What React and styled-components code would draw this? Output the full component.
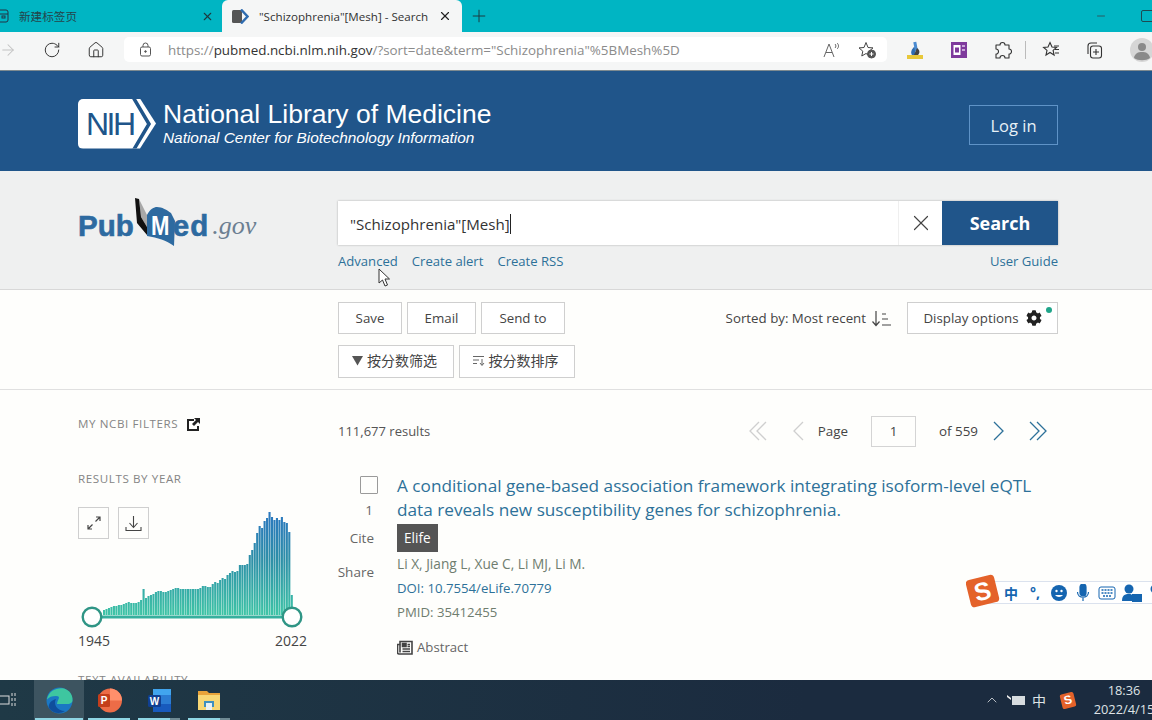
import React from 'react'
import styled, { createGlobalStyle } from 'styled-components'
import { ArrowRight, RotateCw, House, Plus, X, Minus, ChevronUp } from 'lucide-react'
import { FaCog } from 'react-icons/fa'

const sans = `"Open Sans", "Noto Sans CJK SC", sans-serif`
const blue = '#20558a'
const link = '#2d7199'

const GlobalStyle = createGlobalStyle`
    html, body { margin: 0; padding: 0; background: #fff; }
    * { box-sizing: border-box; }
`

const Page = styled.div`
    position: relative;
    width: 1152px;
    height: 720px;
    overflow: hidden;
    display: flex;
    flex-direction: column;
    font-family: ${sans};
    color: #555;
    background: #fefefc;
`

/* browser chrome */
const TabBar = styled.div`
    height: 32px;
    flex: none;
    display: flex;
    background: #00b5c3;
`
const Tab = styled.div`
    width: ${p => p.$width}px;
    height: ${p => (p.$active ? 35 : 32)}px;
    flex: none;
    display: flex;
    align-items: center;
    font-size: 11.6px;
    color: ${p => (p.$active ? '#333' : '#24444a')};
    padding: ${p => p.$pad};
    background: ${p => (p.$active ? '#f5f6f6' : 'transparent')};
    border-radius: 6px 6px 0 0;
    z-index: 1;
`
const TabTitle = styled.span`
    flex: 1;
    margin-left: ${p => p.$gap}px;
    white-space: nowrap;
`
const NewTab = styled.div`
    width: 34px;
    display: flex;
    align-items: center;
    justify-content: center;
    color: #1d3a40;
`
const WindowControls = styled.div`
    margin-left: auto;
    display: flex;
    align-items: center;
    gap: 34px;
    width: 57px;
    overflow: hidden;
    color: #2b5a62;
`
const RestoreBox = styled.div`
    width: 14px;
    height: 12px;
    flex: none;
    border: 1px solid #1d4a52;
    border-radius: 2px;
`
const Toolbar = styled.div`
    height: 39px;
    flex: none;
    display: flex;
    align-items: center;
    background: #f5f6f6;
    border-bottom: 1px solid #7d8a90;
    padding-bottom: 3px;
    color: #333;
`
const ToolSlot = styled.div`
    width: ${p => p.$width || 44}px;
    flex: none;
    margin-left: ${p => p.$left || 0}px;
    display: flex;
    justify-content: center;
    align-items: center;
`
const UrlBox = styled.div`
    width: 763px;
    height: 25px;
    flex: none;
    margin: 0 6px 0 6px;
    background: #fff;
    border-radius: 5px;
    display: flex;
    align-items: center;
    font-size: 13.4px;
    color: #8b8b8b;
    padding-left: 15px;
`
const UrlText = styled.span`
    margin-left: 16px;
    flex: 1;
    white-space: nowrap;
    b { font-weight: 400; color: #333; }
`
const UrlIcons = styled.div`
    display: flex;
    align-items: center;
    gap: 16px;
    padding-right: 10px;
    color: #555;
`
const Separator = styled.div`
    width: 1px;
    height: 18px;
    flex: none;
    background: #bbb;
`

/* NIH banner */
const Banner = styled.header`
    height: 100px;
    flex: none;
    background: ${blue};
    display: flex;
    align-items: center;
    justify-content: space-between;
    padding: 0 94px 0 78px;
`
const Brand = styled.div`
    display: flex;
    align-items: center;
    gap: 7px;
    margin-top: 5px;
`
const NihBadge = styled.div`
    width: 78px;
    height: 50px;
    position: relative;
    color: ${blue};
    font: 400 32px/50px "Liberation Sans", sans-serif;
    letter-spacing: -2.5px;
    padding-left: 8px;
    background: #fff;
    border-radius: 5px 0 0 5px;
    clip-path: polygon(0 0, 62px 0, 78px 25px, 62px 50px, 0 50px);
`
const BadgeCut = styled.svg`
    position: absolute;
    top: 0;
    left: 0;
`
const BrandText = styled.div`
    color: #fff;
    font-family: "Liberation Sans", sans-serif;
    padding-bottom: 2px;
`
const BrandTitle = styled.div`
    font-size: 26.5px;
    line-height: 29px;
`
const BrandSub = styled.div`
    font-size: 15.4px;
    line-height: 17px;
    font-style: italic;
`
const LoginButton = styled.div`
    width: 89px;
    height: 40px;
    border: 1px solid #5f93c7;
    color: #e8f1f7;
    font-size: 16.5px;
    display: flex;
    align-items: center;
    justify-content: center;
    margin-top: 8px;
`

/* search */
const SearchArea = styled.section`
    height: 119px;
    flex: none;
    background: #eff0f0;
    border-bottom: 1px solid #d8d8d8;
    display: flex;
    padding: 30px 94px 0 78px;
`
const Logo = styled.div`
    width: 260px;
    flex: none;
    height: 52px;
    margin-top: -4px;
    padding-bottom: 3px;
    display: flex;
    align-items: flex-end;
`
const LogoWord = styled.span`
    font: 700 29.5px/40px "Liberation Sans", sans-serif;
    -webkit-text-stroke: 0.6px #2d6aa0;
    letter-spacing: ${p => p.$spacing || 0}px;
    color: #2d6aa0;
    position: relative;
`
const Book = styled.div`
    width: 39px;
    height: 50px;
    position: relative;
    flex: none;
    align-self: flex-start;
    svg { overflow: visible; }
`
const BookM = styled.span`
    position: absolute;
    left: 17px;
    top: 16px;
    font: 700 27px/27px "Liberation Sans", sans-serif;
    color: #fff;
    transform: scaleX(0.82);
    transform-origin: left;
`
const LogoGov = styled.span`
    font: italic 400 26px/40px "Liberation Serif", serif;
    color: #6c7f92;
    margin-left: 3px;
`
const SearchColumn = styled.div`
    flex: 1;
`
const SearchBox = styled.div`
    height: 44px;
    display: flex;
    background: #fff;
    box-shadow: 0 0 2px #aaa;
`
const SearchInput = styled.div`
    flex: 1;
    font-size: 15.1px;
    color: #333;
    display: flex;
    align-items: center;
    padding: 2px 0 0 12px;
`
const Caret = styled.span`
    width: 1px;
    height: 20px;
    background: #222;
`
const ClearButton = styled.div`
    width: 44px;
    display: flex;
    align-items: center;
    justify-content: center;
    color: #444;
    border-left: 1px solid #efefef;
`
const SearchButton = styled.div`
    width: 116px;
    background: ${blue};
    color: #fff;
    font-weight: 700;
    font-size: 18px;
    display: flex;
    align-items: center;
    justify-content: center;
`
const SearchLinks = styled.div`
    display: flex;
    gap: 14px;
    margin-top: 6px;
    font-size: 13.1px;
    line-height: 20px;
    color: ${link};
`
const GuideLink = styled.span`
    margin-left: auto;
`

/* actions */
const ActionArea = styled.section`
    height: 100px;
    flex: none;
    border-bottom: 1px solid #e0e0e0;
    padding: 12px 94px 0 338px;
`
const ActionRow = styled.div`
    display: flex;
    align-items: center;
    gap: 5px;
    margin-bottom: 11px;
`
const ActionButton = styled.div`
    width: ${p => p.$width}px;
    height: ${p => p.$height || 32}px;
    flex: none;
    position: relative;
    border: 1px solid #cfcfcf;
    background: #fff;
    color: #444;
    font-size: ${p => (p.$cjk ? 14 : 13.3)}px;
    padding: ${p => (p.$cjk ? '0 3px 3px 0' : '0')};
    display: flex;
    align-items: center;
    justify-content: center;
    gap: 4px;
`
const SortLabel = styled.div`
    margin-left: auto;
    margin-right: 11px;
    font-size: 13.3px;
    color: #444;
    display: flex;
    align-items: center;
    gap: 5px;
`
const GreenDot = styled.span`
    position: absolute;
    top: 4px;
    right: 5px;
    width: 6px;
    height: 6px;
    border-radius: 50%;
    background: #20a58a;
`

/* main */
const Main = styled.main`
    flex: 1;
    min-height: 0;
    overflow: hidden;
    display: grid;
    grid-template-columns: 229px 720px;
    column-gap: 31px;
    padding-left: 78px;
`
const Sidebar = styled.aside`
    padding-top: 26px;
`
const SideHeading = styled.div`
    font-size: 11.6px;
    line-height: 16px;
    letter-spacing: 0.6px;
    color: #858585;
    display: flex;
    align-items: center;
    gap: 9px;
    margin-bottom: ${p => p.$after}px;
`
const Chart = styled.div`
    position: relative;
    width: 229px;
    height: 125px;
`
const ChartTools = styled.div`
    position: absolute;
    top: 0;
    left: 0;
    display: flex;
    gap: 9px;
`
const ChartTool = styled.div`
    width: 31px;
    height: 32px;
    border: 1px solid #cfcfcf;
    display: flex;
    align-items: center;
    justify-content: center;
`
const YearRow = styled.div`
    display: flex;
    justify-content: space-between;
    font-size: 14px;
    line-height: 18px;
    color: #444;
    margin-bottom: 22px;
`
const Content = styled.div`
    padding-top: 25px;
`
const ResultsBar = styled.div`
    height: 32px;
    display: flex;
    align-items: center;
    font-size: 13px;
    color: #555;
    margin-bottom: 27px;
`
const Pager = styled.div`
    margin-left: auto;
    display: flex;
    align-items: center;
    font-size: 13.4px;
    color: #444;
`
const PageInput = styled.div`
    width: 45px;
    height: 31px;
    border: 1px solid #d4d4d4;
    display: flex;
    align-items: center;
    justify-content: center;
    margin: 0 23px 0 23px;
`
const PagerArrow = styled.svg`
    flex: none;
    margin: ${p => p.$margin};
`
const Result = styled.article`
    display: grid;
    grid-template-columns: 36px 1fr;
    column-gap: 23px;
`
const ResultSide = styled.div`
    display: flex;
    flex-direction: column;
    align-items: flex-end;
    font-size: 13.5px;
    color: #666;
`
const Checkbox = styled.div`
    width: 18px;
    height: 18px;
    margin-right: -4px;
    margin-top: 2px;
    border: 1px solid #9a9a9a;
    border-radius: 1px;
`
const SideLabel = styled.div`
    line-height: 20px;
    margin-top: ${p => p.$top}px;
    margin-right: ${p => p.$right || 0}px;
`
const ResultBody = styled.div``
const ResultTitle = styled.a`
    display: block;
    font-size: 17.2px;
    line-height: 24px;
    color: ${link};
`
const JournalTag = styled.span`
    display: inline-block;
    height: 28px;
    line-height: 28px;
    padding: 0 7px;
    margin-top: 2px;
    background: #555;
    color: #fff;
    font-size: 13.6px;
`
const Meta = styled.div`
    font-size: ${p => p.$size || 13.2}px;
    line-height: 24px;
    color: ${p => p.$color || '#6f7d6f'};
`
const AbstractRow = styled.div`
    display: flex;
    align-items: center;
    gap: 4px;
    margin-top: 14px;
    font-size: 13.2px;
    color: #666;
`

/* taskbar */
const Taskbar = styled.footer`
    height: 40px;
    flex: none;
    position: relative;
    z-index: 2;
    display: flex;
    align-items: stretch;
    background: linear-gradient(to right, #1f3946, #1b2b3f 70%);
    color: #e8e8e8;
`
const TaskView = styled.div`
    width: 34px;
    flex: none;
    display: flex;
    align-items: center;
`
const TaskApp = styled.div`
    width: 50px;
    flex: none;
    display: flex;
    align-items: center;
    justify-content: center;
    position: relative;
    background: ${p => (p.$active ? '#3d5460' : 'transparent')};
    &::after {
        content: '';
        position: absolute;
        left: ${p => (p.$active ? 1 : 4)}px;
        right: ${p => (p.$stacked ? 14 : p.$active ? 1 : 4)}px;
        bottom: 0;
        height: 2px;
        background: #8fd6e4;
        box-shadow: ${p => (p.$stacked ? '10px 0 0 #6f8a94' : 'none')};
    }
`
const Tray = styled.div`
    margin-left: auto;
    display: flex;
    align-items: center;
    gap: 7px;
    font-size: 14px;
    color: #dfe3e6;
`
const Clock = styled.div`
    width: 64px;
    margin: 0 -4px 0 10px;
    font-size: 12.8px;
    line-height: 19px;
    text-align: center;
    white-space: nowrap;
`

/* overlays */
const ImeBar = styled.div`
    position: absolute;
    left: 966px;
    top: 570px;
    width: 186px;
    height: 42px;
    overflow: hidden;
    z-index: 3;
`
const ImeStrip = styled.div`
    position: absolute;
    left: 20px;
    top: 11px;
    width: 200px;
    height: 23px;
    background: #fff;
    border: 1px solid #dbe2ee;
    display: flex;
    align-items: center;
    gap: 6px;
    padding-left: 15px;
    color: #1565b0;
`
const ImeChar = styled.span`
    width: 18px;
    flex: none;
    font-size: 14px;
    font-weight: 700;
    text-align: center;
`
const SogouMark = styled.div`
    position: absolute;
    left: 2px;
    top: 7px;
    width: 29px;
    height: 28px;
    transform: rotate(-14deg);
    border-radius: 4px;
    background: #e4622a;
    color: #fff;
    font: 700 25px/28px "Liberation Sans", sans-serif;
    text-align: center;
`
const TraySogou = styled(SogouMark)`
    position: static;
    width: 14px;
    height: 15px;
    margin-left: 8px;
    margin-right: 0;
    font-size: 12px;
    line-height: 15px;
    border-radius: 2px;
    flex: none;
`
const Pointer = styled.svg`
    position: absolute;
    left: 378px;
    top: 268px;
    z-index: 3;
`

const years = [5,6,7,8,9,9,10,10,11,12,13,12,12,12,13,15,26,17,19,20,21,23,24,24,23,23,24,25,26,27,27,26,26,26,26,26,26,26,26,27,29,29,28,28,31,33,32,35,37,36,40,42,44,43,44,50,50,50,51,60,65,72,82,89,87,94,97,103,98,95,97,95,98,93,92,83,20]

const YearChart = () => {
    const base = 108
    return (
        <svg width="229" height="125" viewBox="0 0 229 125">
            <defs>
                <linearGradient id="bars" x1="0" y1="5" x2="0" y2={base} gradientUnits="userSpaceOnUse">
                    <stop offset="0" stopColor="#2c78c0" />
                    <stop offset="0.45" stopColor="#2d8ea8" />
                    <stop offset="1" stopColor="#3ec4a6" />
                </linearGradient>
            </defs>
            {years.map((h, i) => (
                <rect key={i} x={25 + i * 2.47} y={base - h} width="2.1" height={h} fill="url(#bars)" />
            ))}
            <line x1="14" x2="214" y1={base + 2} y2={base + 2} stroke="#36b09e" strokeWidth="3" />
            <circle cx="14" cy={base + 2} r="9.3" fill="#fff" stroke="#2f9585" strokeWidth="2.4" />
            <circle cx="214" cy={base + 2} r="9.3" fill="#fff" stroke="#2f9585" strokeWidth="2.4" />
        </svg>
    )
}

const Chevron = ({ double, left, color, margin }) => (
    <PagerArrow width={double ? 20 : 12} height="22" viewBox={double ? '0 0 20 22' : '0 0 12 22'} fill="none" stroke={color} strokeWidth="1.3" $margin={margin}>
        {left ? (
            <>
                <polyline points="11,2 2,11 11,20" />
                {double && <polyline points="18,2 9,11 18,20" />}
            </>
        ) : (
            <>
                <polyline points="1,2 10,11 1,20" />
                {double && <polyline points="8,2 17,11 8,20" />}
            </>
        )}
    </PagerArrow>
)

const App = () => {
    return (
        <Page>
            <GlobalStyle />
            <TabBar>
                <Tab $width={222} $pad="0 8px 0 0">
                    <svg width="10" height="14" viewBox="0 0 10 14" fill="none" stroke="#234" strokeWidth="1"><rect x="-5" y="1" width="13" height="12" rx="2" /><line x1="-5" x2="8" y1="5" y2="5" /><rect x="2" y="7" width="3" height="2" /></svg>
                    <TabTitle $gap={9}>新建标签页</TabTitle>
                    <X size={13} color="#1d3a40" />
                </Tab>
                <Tab $active $width={240} $pad="0 10px 3px 10px">
                    <svg width="17" height="15" viewBox="0 0 17 15"><rect x="0" y="1" width="10" height="13" rx="1.5" fill="#555" /><polyline points="9,0.5 15.5,7.5 9,14.5" fill="none" stroke="#2f6cb0" strokeWidth="2.4" /></svg>
                    <TabTitle $gap={10}>"Schizophrenia"[Mesh] - Search</TabTitle>
                    <X size={14} color="#222" />
                </Tab>
                <NewTab><Plus size={20} strokeWidth={1.2} /></NewTab>
                <WindowControls>
                    <Minus size={12} style={{ flex: 'none' }} />
                    <RestoreBox />
                </WindowControls>
            </TabBar>
            <Toolbar>
                <ToolSlot $width={30} $left={-7}><ArrowRight size={18} color="#c2c2c2" strokeWidth={1.4} /></ToolSlot>
                <ToolSlot $width={44} $left={7}><RotateCw size={18} strokeWidth={1.3} /></ToolSlot>
                <ToolSlot $width={44}><House size={18} strokeWidth={1.3} /></ToolSlot>
                <UrlBox>
                    <svg width="13" height="15" viewBox="0 0 13 15" fill="none" stroke="#555" strokeWidth="1"><rect x="1.5" y="5" width="10" height="9" rx="1.5" /><path d="M4 5V3.5a2.5 2.5 0 0 1 5 0V5" /><circle cx="6.5" cy="9.5" r="0.8" fill="#555" /></svg>
                    <UrlText>https://<b>pubmed.ncbi.nlm.nih.gov</b>/?sort=date&amp;term="Schizophrenia"%5BMesh%5D</UrlText>
                    <UrlIcons>
                        <svg width="18" height="16" viewBox="0 0 18 16" fill="none" stroke="#666" strokeWidth="1"><path d="M1 15 6 2l5 13M3 10.5h6" /><path d="M12 2c1.2 1 1.2 3 0 4M14 1c2 1.6 2 4.4 0 6" /></svg>
                        <svg width="20" height="18" viewBox="0 0 20 18" fill="none" stroke="#444" strokeWidth="1"><path d="M9 1.5 11 6.5l5 .4-3.8 3.3 1 4.8L9 12.5l-4.2 2.5 1-4.8L2 6.9l5-.4z" /><circle cx="14.5" cy="13" r="4" fill="#555" stroke="#555" /><path d="M14.5 11v4M12.5 13h4" stroke="#fff" /></svg>
                    </UrlIcons>
                </UrlBox>
                <ToolSlot $width={44}>
                    <svg width="18" height="20" viewBox="0 0 18 20"><rect x="1" y="15" width="16" height="4" fill="#e8c83a" /><path d="M6 15c-2-3 0-6 2-8l2 1-1 7z" fill="#2f6cb0" /><rect x="8" y="2" width="3" height="9" fill="#4a8ad0" transform="rotate(-10 9 6)" /><path d="M11 8c3 2 3 5 1 7H8z" fill="#444" /></svg>
                </ToolSlot>
                <ToolSlot $width={44}>
                    <svg width="16" height="16" viewBox="0 0 16 16"><rect width="16" height="16" fill="#7e3a9c" /><rect x="2.5" y="3" width="7" height="10" fill="#fff" /><rect x="11" y="3" width="3" height="2" fill="#c9a6d9" /><rect x="11" y="7" width="3" height="2" fill="#c9a6d9" /><rect x="4" y="5.5" width="4" height="5" fill="#7e3a9c" /></svg>
                </ToolSlot>
                <ToolSlot $width={44}>
                    <svg width="20" height="20" viewBox="0 0 20 20" fill="none" stroke="#333" strokeWidth="1.1" strokeLinejoin="round"><path d="M3 5h4a2.5 2.5 0 1 1 5 0h4v4a2.5 2.5 0 1 1 0 5v4h-4a2.5 2.5 0 1 0-5 0H3v-4a2.5 2.5 0 1 0 0-5z" /></svg>
                </ToolSlot>
                <Separator />
                <ToolSlot $width={48}>
                    <svg width="18" height="17" viewBox="-2 0 18 17" fill="none" stroke="#333" strokeWidth="1.1"><path d="M7 1.5 9 6l4.5.4-3.4 3 1 4.6L7 11.5 3 14l1-4.6-3.4-3L5 6z" /><path d="M11 5h5M12 8.500h4M12 12h4" /></svg>
                </ToolSlot>
                <ToolSlot $width={40}>
                    <svg width="18" height="18" viewBox="0 0 18 18" fill="none" stroke="#333" strokeWidth="1.1"><path d="M3 13V5a3 3 0 0 1 3-3h6" /><rect x="5.5" y="5" width="11" height="12" rx="2.5" /><path d="M11 8v6M8 11h6" /></svg>
                </ToolSlot>
                <ToolSlot $width={40} $left={8}>
                    <svg width="24" height="24" viewBox="0 0 24 24"><circle cx="12" cy="12" r="12" fill="#d6d6d6" /><circle cx="12" cy="9" r="4" fill="#8a8a8a" /><path d="M4 20c1-5 4-6 8-6s7 1 8 6c-4 3-12 3-16 0z" fill="#8a8a8a" /></svg>
                </ToolSlot>
            </Toolbar>

            <Banner>
                <Brand>
                    <NihBadge>
                        NIH
                        <BadgeCut width="78" height="50" viewBox="0 0 78 50" fill="none">
                            <polyline points="55,-2 71,25 55,52" stroke={blue} strokeWidth="3.5" />
                        </BadgeCut>
                    </NihBadge>
                    <BrandText>
                        <BrandTitle>National Library of Medicine</BrandTitle>
                        <BrandSub>National Center for Biotechnology Information</BrandSub>
                    </BrandText>
                </Brand>
                <LoginButton>Log in</LoginButton>
            </Banner>

            <SearchArea>
                <Logo>
                    <LogoWord>Pub</LogoWord>
                    <Book>
                        <svg width="39" height="50" viewBox="0 0 39 50">
                            <path d="M5 2 13 18V30L7 20z" fill="#a8a8a8" />
                            <path d="M1 1 5 2 7 20 13 30V38L3 26z" fill="#111" />
                            <path d="M13 18C16 12 20 10 23 10 28 10 33 13 37 16L41 24 40 49C32 43 24 41 13 39z" fill="#2d6aa0" />
                        </svg>
                        <BookM>M</BookM>
                    </Book>
                    <LogoWord $spacing={1}>ed</LogoWord>
                    <LogoGov>.gov</LogoGov>
                </Logo>
                <SearchColumn>
                    <SearchBox>
                        <SearchInput>"Schizophrenia"[Mesh]<Caret /></SearchInput>
                        <ClearButton><X size={26} strokeWidth={1.1} /></ClearButton>
                        <SearchButton>Search</SearchButton>
                    </SearchBox>
                    <SearchLinks>
                        <span>Advanced</span>
                        <span>Create alert</span>
                        <span>Create RSS</span>
                        <GuideLink>User Guide</GuideLink>
                    </SearchLinks>
                </SearchColumn>
            </SearchArea>

            <ActionArea>
                <ActionRow>
                    <ActionButton $width={64}>Save</ActionButton>
                    <ActionButton $width={69}>Email</ActionButton>
                    <ActionButton $width={84}>Send to</ActionButton>
                    <SortLabel>
                        Sorted by: Most recent
                        <svg width="20" height="17" viewBox="0 0 20 17" fill="none" stroke="#444" strokeWidth="1.2"><path d="M5 1v14M1.5 11.5 5 15.5l3.5-4M11 4h4M11 9h6M11 15h9" /></svg>
                    </SortLabel>
                    <ActionButton $width={151}>
                        Display options
                        <FaCog size={16} color="#222" style={{ marginLeft: 3 }} />
                        <GreenDot />
                    </ActionButton>
                </ActionRow>
                <ActionRow>
                    <ActionButton $width={116} $height={33} $cjk>
                        <svg width="11" height="11" viewBox="0 0 11 11"><path d="M0 1h11L5.5 10.5z" fill="#555" /></svg>
                        按分数筛选
                    </ActionButton>
                    <ActionButton $width={116} $height={33} $cjk>
                        <svg width="12" height="11" viewBox="0 0 12 11" fill="none" stroke="#666"><path d="M0 1.5h11M0 5h6M0 8.5h4M9 4v6M7 8l2 2.5L11 8" /></svg>
                        按分数排序
                    </ActionButton>
                </ActionRow>
            </ActionArea>

            <Main>
                <Sidebar>
                    <SideHeading $after={39}>
                        MY NCBI FILTERS
                        <svg width="13" height="13" viewBox="0 0 13 13"><path d="M0 1h7v2H2v8h8V8h2v5H0z" fill="#222" /><path d="M7 0h6v6l-2-2-4 4-2-2 4-4z" fill="#222" /></svg>
                    </SideHeading>
                    <SideHeading $after={20}>RESULTS BY YEAR</SideHeading>
                    <Chart>
                        <YearChart />
                        <ChartTools>
                            <ChartTool>
                                <svg width="16" height="16" viewBox="0 0 16 16" fill="none" stroke="#444" strokeWidth="1.2"><path d="M9.5 6.5 14 2M10 2h4v4M6.500 9.500 2 14M2 10v4h4" /></svg>
                            </ChartTool>
                            <ChartTool>
                                <svg width="17" height="17" viewBox="0 0 17 17" fill="none" stroke="#444" strokeWidth="1.1"><path d="M8.5 1v11M4.5 8l4 4.5 4-4.500M1 12v3.500h15V12" /></svg>
                            </ChartTool>
                        </ChartTools>
                    </Chart>
                    <YearRow><span>1945</span><span>2022</span></YearRow>
                    <SideHeading $after={0}>TEXT AVAILABILITY</SideHeading>
                </Sidebar>
                <Content>
                    <ResultsBar>
                        111,677 results
                        <Pager>
                            <Chevron left double color="#cfcfcf" />
                            <Chevron left color="#cfcfcf" margin="0 14px 0 24px" />
                            Page
                            <PageInput>1</PageInput>
                            of 559
                            <Chevron color={link} margin="0 0 0 15px" />
                            <Chevron double color={link} margin="0 9px 0 24px" />
                        </Pager>
                    </ResultsBar>
                    <Result>
                        <ResultSide>
                            <Checkbox />
                            <SideLabel $top={6} $right={1}>1</SideLabel>
                            <SideLabel $top={8}>Cite</SideLabel>
                            <SideLabel $top={14}>Share</SideLabel>
                        </ResultSide>
                        <ResultBody>
                            <ResultTitle>
                                A conditional gene-based association framework integrating isoform-level eQTL data reveals new susceptibility genes for schizophrenia.
                            </ResultTitle>
                            <JournalTag>Elife</JournalTag>
                            <Meta $size={13.7}>Li X, Jiang L, Xue C, Li MJ, Li M.</Meta>
                            <Meta $color={link}>DOI: 10.7554/eLife.70779</Meta>
                            <Meta>PMID: 35412455</Meta>
                            <AbstractRow>
                                <svg width="16" height="17" viewBox="0 0 16 16" fill="none" stroke="#444" strokeWidth="1.6"><path d="M3 2h12v12.5H2a1.5 1.5 0 0 1-1.5-1.5V5H3z" /><path d="M3 5v8" /><rect x="5.5" y="4" width="3.5" height="3" fill="#444" /><path d="M10.5 5H13M10.5 7H13M5.5 9.5H13M5.5 12H13" /></svg>
                                Abstract
                            </AbstractRow>
                        </ResultBody>
                    </Result>
                </Content>
            </Main>

            <Taskbar>
                <TaskView>
                    <svg width="17" height="14" viewBox="0 0 17 14" fill="none" stroke="#ddd"><rect x="-5" y="3" width="14" height="8" /><path d="M12 0v14M15 0v14" strokeDasharray="3 2" /></svg>
                </TaskView>
                <TaskApp $active>
                    <svg width="27" height="27" viewBox="0 0 27 27">
                        <circle cx="13.5" cy="13.5" r="13" fill="#1a78c4" />
                        <path d="M1 12C3 3 12 0 18 1.5c5 1.5 9 6 8.5 12-.3 3-4 4-8 3.5H11c0-4 5-8-1-8-4 0-7 1-9 3.5z" fill="#3ec6a0" />
                        <path d="M10 12c-3 5 1 12 9 12-4 3-12 3-16-3-1-5 3-8 7-9z" fill="#0f4e9c" />
                    </svg>
                </TaskApp>
                <TaskApp>
                    <svg width="25" height="25" viewBox="0 0 25 25">
                        <circle cx="13" cy="12.5" r="12" fill="#ed6c47" />
                        <path d="M13 .5a12 12 0 0 1 12 12H13z" fill="#ff8f6b" />
                        <rect x="1" y="6" width="12" height="13" rx="1.5" fill="#c43e1c" />
                        <text x="7" y="16" fontSize="10" fontWeight="700" fill="#fff" textAnchor="middle" fontFamily="Liberation Sans">P</text>
                    </svg>
                </TaskApp>
                <TaskApp $stacked>
                    <svg width="25" height="25" viewBox="0 0 25 25">
                        <rect x="6" y="1" width="18" height="23" rx="1.5" fill="#2b7cd3" />
                        <rect x="6" y="1" width="18" height="6" fill="#41a5ee" />
                        <rect x="6" y="16" width="18" height="8" fill="#185abd" />
                        <rect x="1" y="7" width="13" height="12" rx="1.5" fill="#103f91" />
                        <text x="7.5" y="16.5" fontSize="10" fontWeight="700" fill="#fff" textAnchor="middle" fontFamily="Liberation Sans">W</text>
                    </svg>
                </TaskApp>
                <TaskApp $stacked>
                    <svg width="24" height="22" viewBox="0 0 24 22">
                        <path d="M1 2h9l2 2h11v17H1z" fill="#e8a33a" />
                        <rect x="1" y="6" width="22" height="15" fill="#f8d775" />
                        <rect x="7" y="12" width="10" height="6" fill="#3f8fc0" />
                        <rect x="9" y="14" width="6" height="7" fill="#e9f0f4" />
                    </svg>
                </TaskApp>
                <Tray>
                    <ChevronUp size={16} strokeWidth={1.2} />
                    <svg width="18" height="12" viewBox="0 0 18 12"><rect x="5" y="2" width="13" height="9" fill="#d7dcdf" /><path d="M0 1l4 3v2L0 3z" fill="#eee" /></svg>
                    <span>中</span>
                    <TraySogou>S</TraySogou>
                    <Clock>
                        18:36
                        <br />
                        2022/4/15
                    </Clock>
                </Tray>
            </Taskbar>

            <ImeBar>
                <ImeStrip>
                    <ImeChar>中</ImeChar>
                    <ImeChar>°,</ImeChar>
                    <svg width="18" height="18" viewBox="0 0 18 18"><circle cx="9" cy="9" r="8" fill="#1565b0" /><circle cx="6.5" cy="7" r="1.2" fill="#fff" /><circle cx="11.5" cy="7" r="1.2" fill="#fff" /><path d="M5 11c2 2.5 6 2.5 8 0z" fill="#fff" /></svg>
                    <svg width="18" height="18" viewBox="0 0 18 18" fill="none" stroke="#1565b0" strokeWidth="1.2"><rect x="6" y="0" width="6" height="12" rx="3" fill="#1565b0" /><path d="M3.5 8c0 7 11 7 11 0M9 14v3" /></svg>
                    <svg width="18" height="14" viewBox="0 0 18 14" fill="none" stroke="#1565b0"><rect x="1" y="1" width="16" height="12" rx="2" /><path d="M3.5 4h11M3.5 7h11M5 10h8" strokeDasharray="2 1" strokeWidth="1.5" /></svg>
                    <svg width="20" height="18" viewBox="0 0 20 18"><circle cx="7" cy="5" r="4.5" fill="#1565b0" /><path d="M0 17c0-6 3-7 7-7s5 2 5 7z" fill="#1565b0" /><rect x="10" y="10" width="10" height="8" fill="#1565b0" /></svg>
                    <svg width="14" height="18" viewBox="0 0 14 18"><circle cx="7" cy="5" r="4.5" fill="#1565b0" /><rect x="5" y="9" width="4" height="8" fill="#1565b0" /></svg>
                </ImeStrip>
                <SogouMark>S</SogouMark>
            </ImeBar>

            <Pointer width="13" height="20" viewBox="0 0 13 20">
                <path d="M1 1v14l3.500-3 2.500 6 2.500-1-2.500-6h4.500z" fill="#fff" stroke="#333" strokeWidth="1" />
            </Pointer>
        </Page>
    )
}

export default App
